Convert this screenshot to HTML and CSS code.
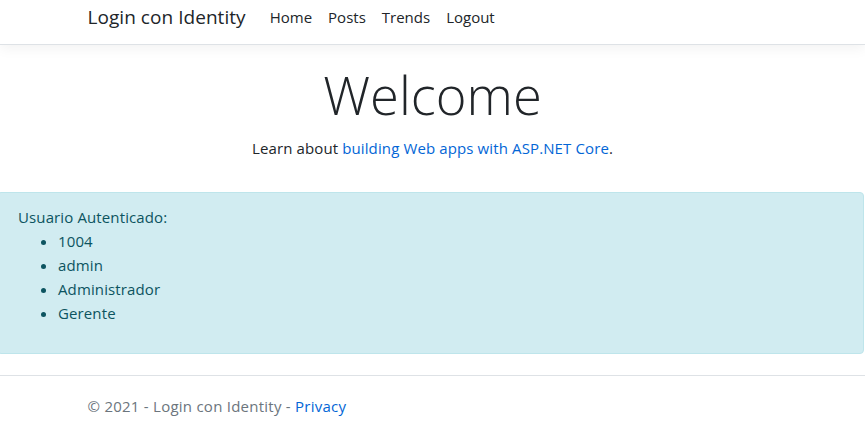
FILE: index.html
```html
<!DOCTYPE html>
<html lang="es">
<head>
<meta charset="utf-8">
<title>Login con Identity</title>
<link rel="stylesheet" href="styles.css">
</head>
<body>
<header class="topbar">
  <nav class="container navbar">
    <a class="brand" href="#">Login con Identity</a>
    <ul class="nav-links">
      <li><a href="#">Home</a></li>
      <li><a href="#">Posts</a></li>
      <li><a href="#">Trends</a></li>
      <li><a href="#">Logout</a></li>
    </ul>
  </nav>
</header>
<main>
  <div class="container hero">
    <h1 class="display">Welcome</h1>
    <p>Learn about <a class="link" href="#">building Web apps with ASP.NET Core</a>.</p>
  </div>
  <div class="alert">
    Usuario Autenticado:
    <ul class="claims">
      <li>1004</li>
      <li>admin</li>
      <li>Administrador</li>
      <li>Gerente</li>
    </ul>
  </div>
</main>
<footer class="footer">
  <div class="container">
    &copy; 2021 - Login con Identity - <a class="link" href="#">Privacy</a>
  </div>
</footer>
</body>
</html>
```
FILE: styles.css
```css
* { box-sizing: border-box; }
html, body { margin: 0; padding: 0; }
body {
  font-family: "Open Sans", "Noto Sans", sans-serif;
  font-size: 15px;
  letter-spacing: 0.12px;
  line-height: 24px;
  color: #212529;
  background: #fff;
  overflow: hidden;
}
a { text-decoration: none; }
.link { color: #0366d6; }
.container {
  width: 720px;
  margin: 0 auto;
  padding: 0 15px;
}
.topbar {
  height: 45px;
  border-bottom: 1px solid #dee2e6;
  box-shadow: 0 4px 12px rgba(0,0,0,.05);
  margin-bottom: 16px;
}
.navbar {
  display: flex;
  align-items: center;
  height: 33px;
}
.brand {
  font-size: 19px;
  letter-spacing: 0.05px;
  line-height: 30px;
  color: #212529;
  margin-right: 16px;
}
.nav-links {
  display: flex;
  list-style: none;
  margin: 0;
  padding: 0;
  letter-spacing: 0;
}
.nav-links a {
  display: block;
  padding: 0 8px;
  color: #212529;
}
.hero { text-align: center; }
.display {
  font-size: 52.5px;
  font-weight: 300;
  letter-spacing: 0;
  line-height: 67px;
  margin: 0 0 8px;
}
.hero p { margin: 0 0 32px; }
.alert {
  margin: 0 1px 0 -3px;
  padding: 12px 20px;
  border: 1px solid #bee5eb;
  border-radius: 4px;
  background: #d1ecf1;
  color: #0c5460;
}
.claims {
  margin: 0 0 16px;
  padding-left: 40px;
}
.footer {
  margin-top: 21px;
  border-top: 1px solid #dee2e6;
  line-height: 60px;
  letter-spacing: 0.25px;
  color: #6c757d;
}
```
